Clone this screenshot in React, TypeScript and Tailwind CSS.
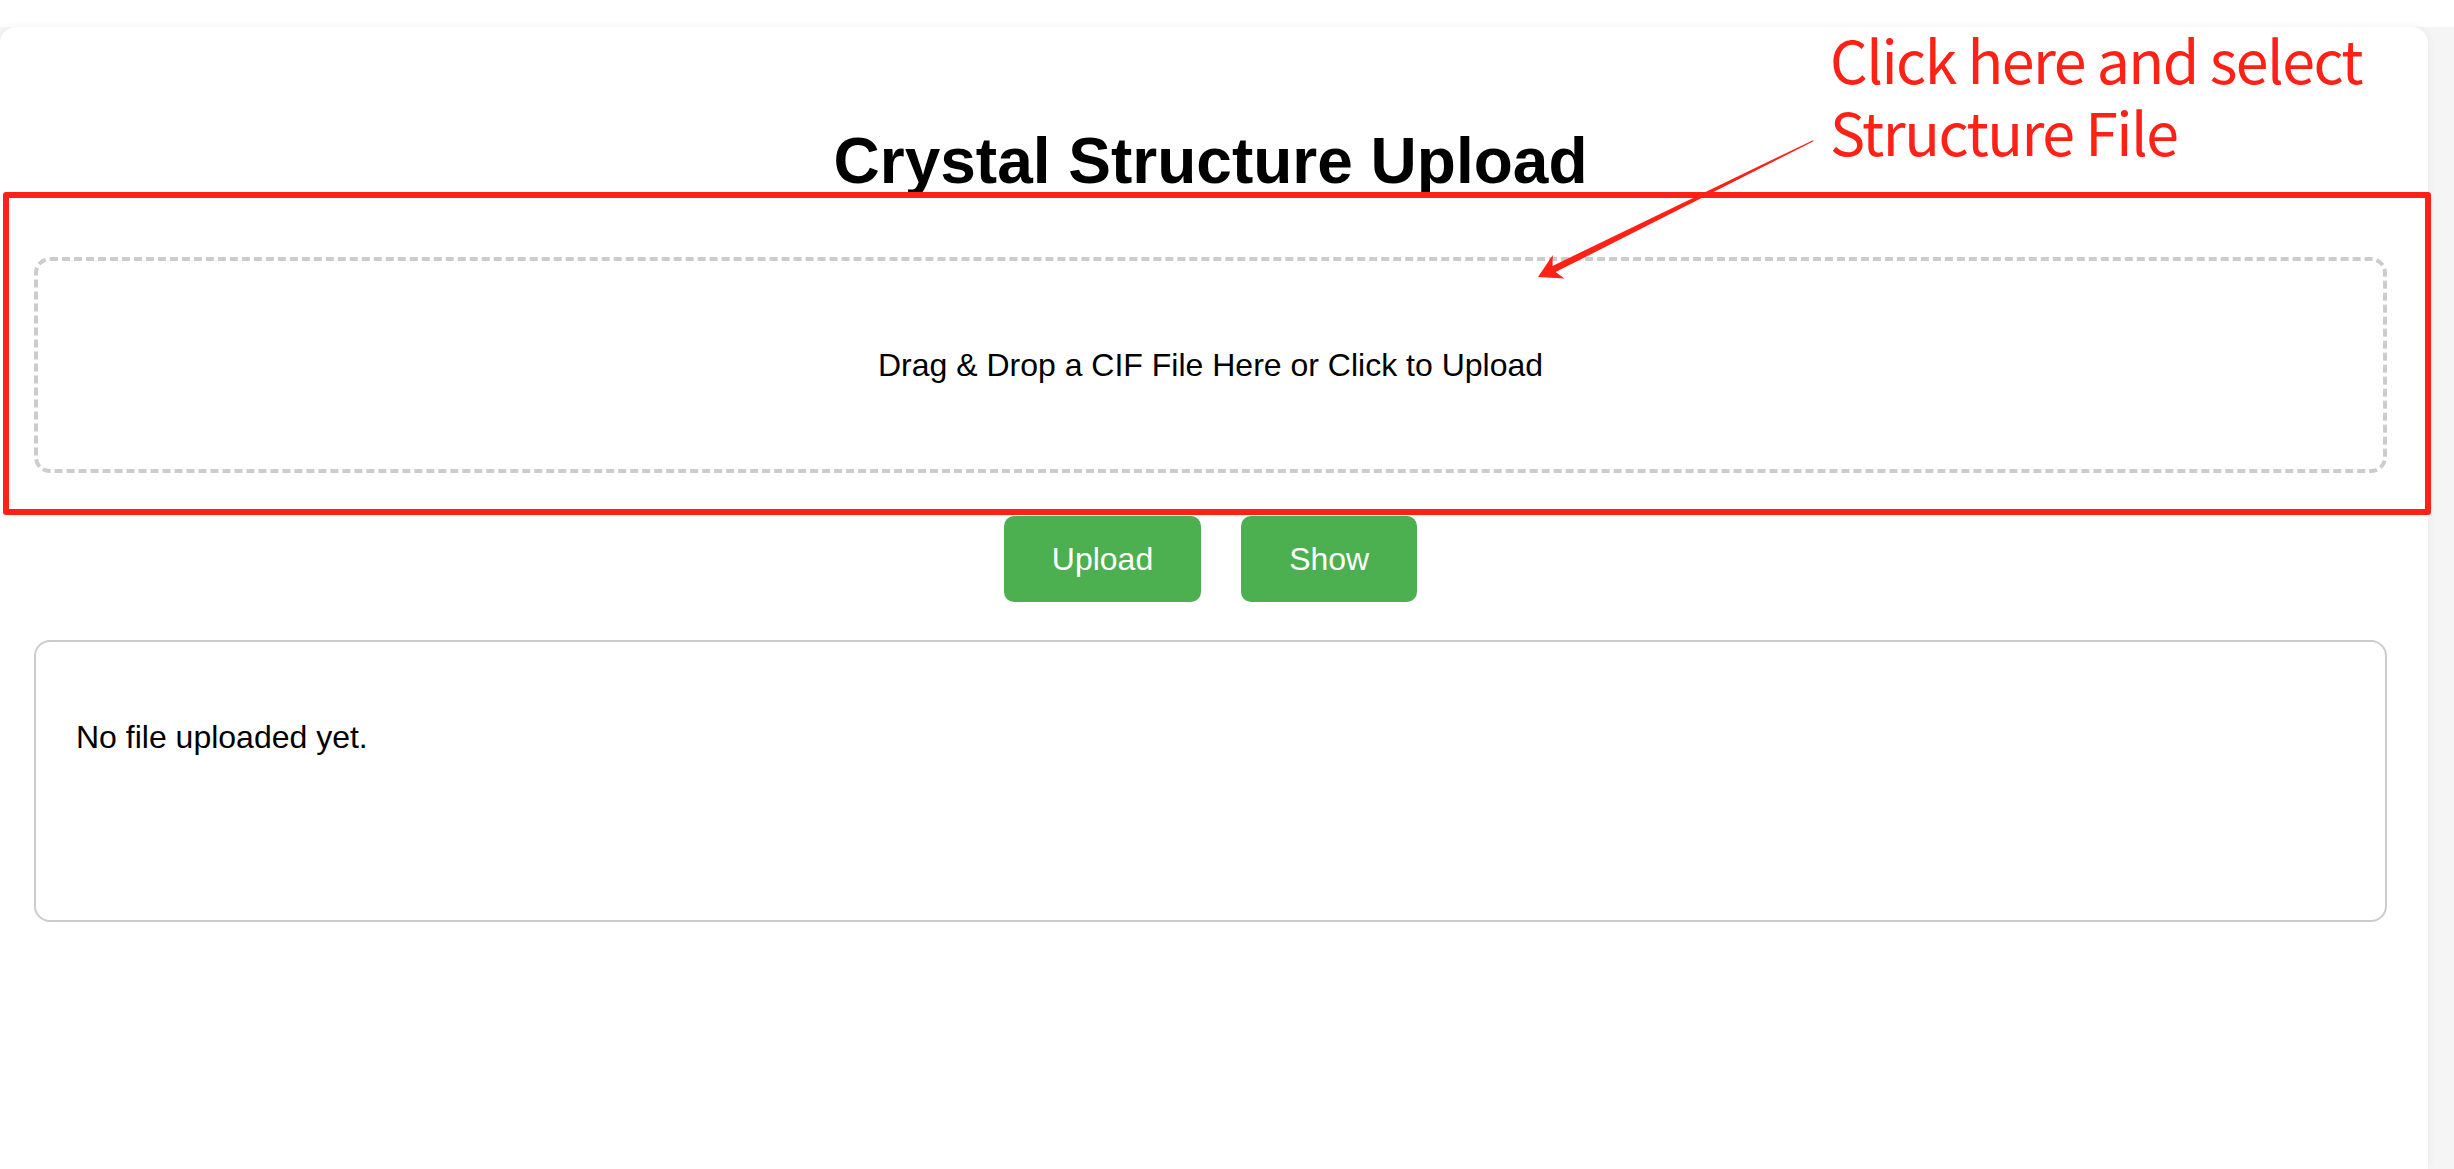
export default function App() {
  return (
    <div className="relative h-[1169px] w-full overflow-hidden bg-white font-['Liberation_Sans',Arial,sans-serif] text-black">
      <div className="mt-[27px] flex bg-[#f5f5f5]">
        <main className="min-h-[1142px] w-[2428px] rounded-t-[16px] bg-white pl-[34px] pr-[41px] pt-[97px] shadow-[0_0_10px_rgba(0,0,0,0.06)]">
          <h1 className="mx-auto w-fit text-center text-[64px] font-bold leading-[74px]">Crystal Structure Upload</h1>

          <div className="mt-[59px] cursor-pointer rounded-[16px] border-4 border-dashed border-[#ccc] py-[80px] text-center text-[32px] leading-[48px]">
            Drag &amp; Drop a CIF File Here or Click to Upload
          </div>

          <div className="mt-[43px] flex justify-center gap-[40px]">
            <button className="h-[86px] rounded-[10px] bg-[#4caf50] px-[48px] text-[32px] text-white">Upload</button>
            <button className="h-[86px] rounded-[10px] bg-[#4caf50] px-[48px] text-[32px] text-white">Show</button>
          </div>

          <div className="mt-[38px] min-h-[282px] rounded-[16px] border-2 border-[#ccc] px-[40px] pt-[71px]">
            <p className="text-[32px] leading-[48px]">No file uploaded yet.</p>
          </div>
        </main>
      </div>

      {/* annotation overlay */}
      <div className="pointer-events-none absolute left-[3px] top-[192px] h-[323px] w-[2428px] rounded-[3px] border-[6px] border-[#ff2116]" />
      <svg
        className="pointer-events-none absolute left-0 top-0"
        width="2454"
        height="1169"
        viewBox="0 0 2454 1169"
      >
        <polygon
          fill="#ff2116"
          points="1813,140.2 1813.5,141.3 1555.6,272.1 1564.4,278.5 1538,277 1552.8,255.1 1552.5,265.9"
        />
      </svg>
      <div className="pointer-events-none absolute left-[1830px] top-[23px] whitespace-nowrap font-['Noto_Sans_CJK_SC','Noto_Sans',sans-serif] text-[59px] leading-[72px] tracking-[-1.5px] text-[#ff2116]">
        <div>Click here and select</div>
        <div>Structure File</div>
      </div>
    </div>
  );
}
